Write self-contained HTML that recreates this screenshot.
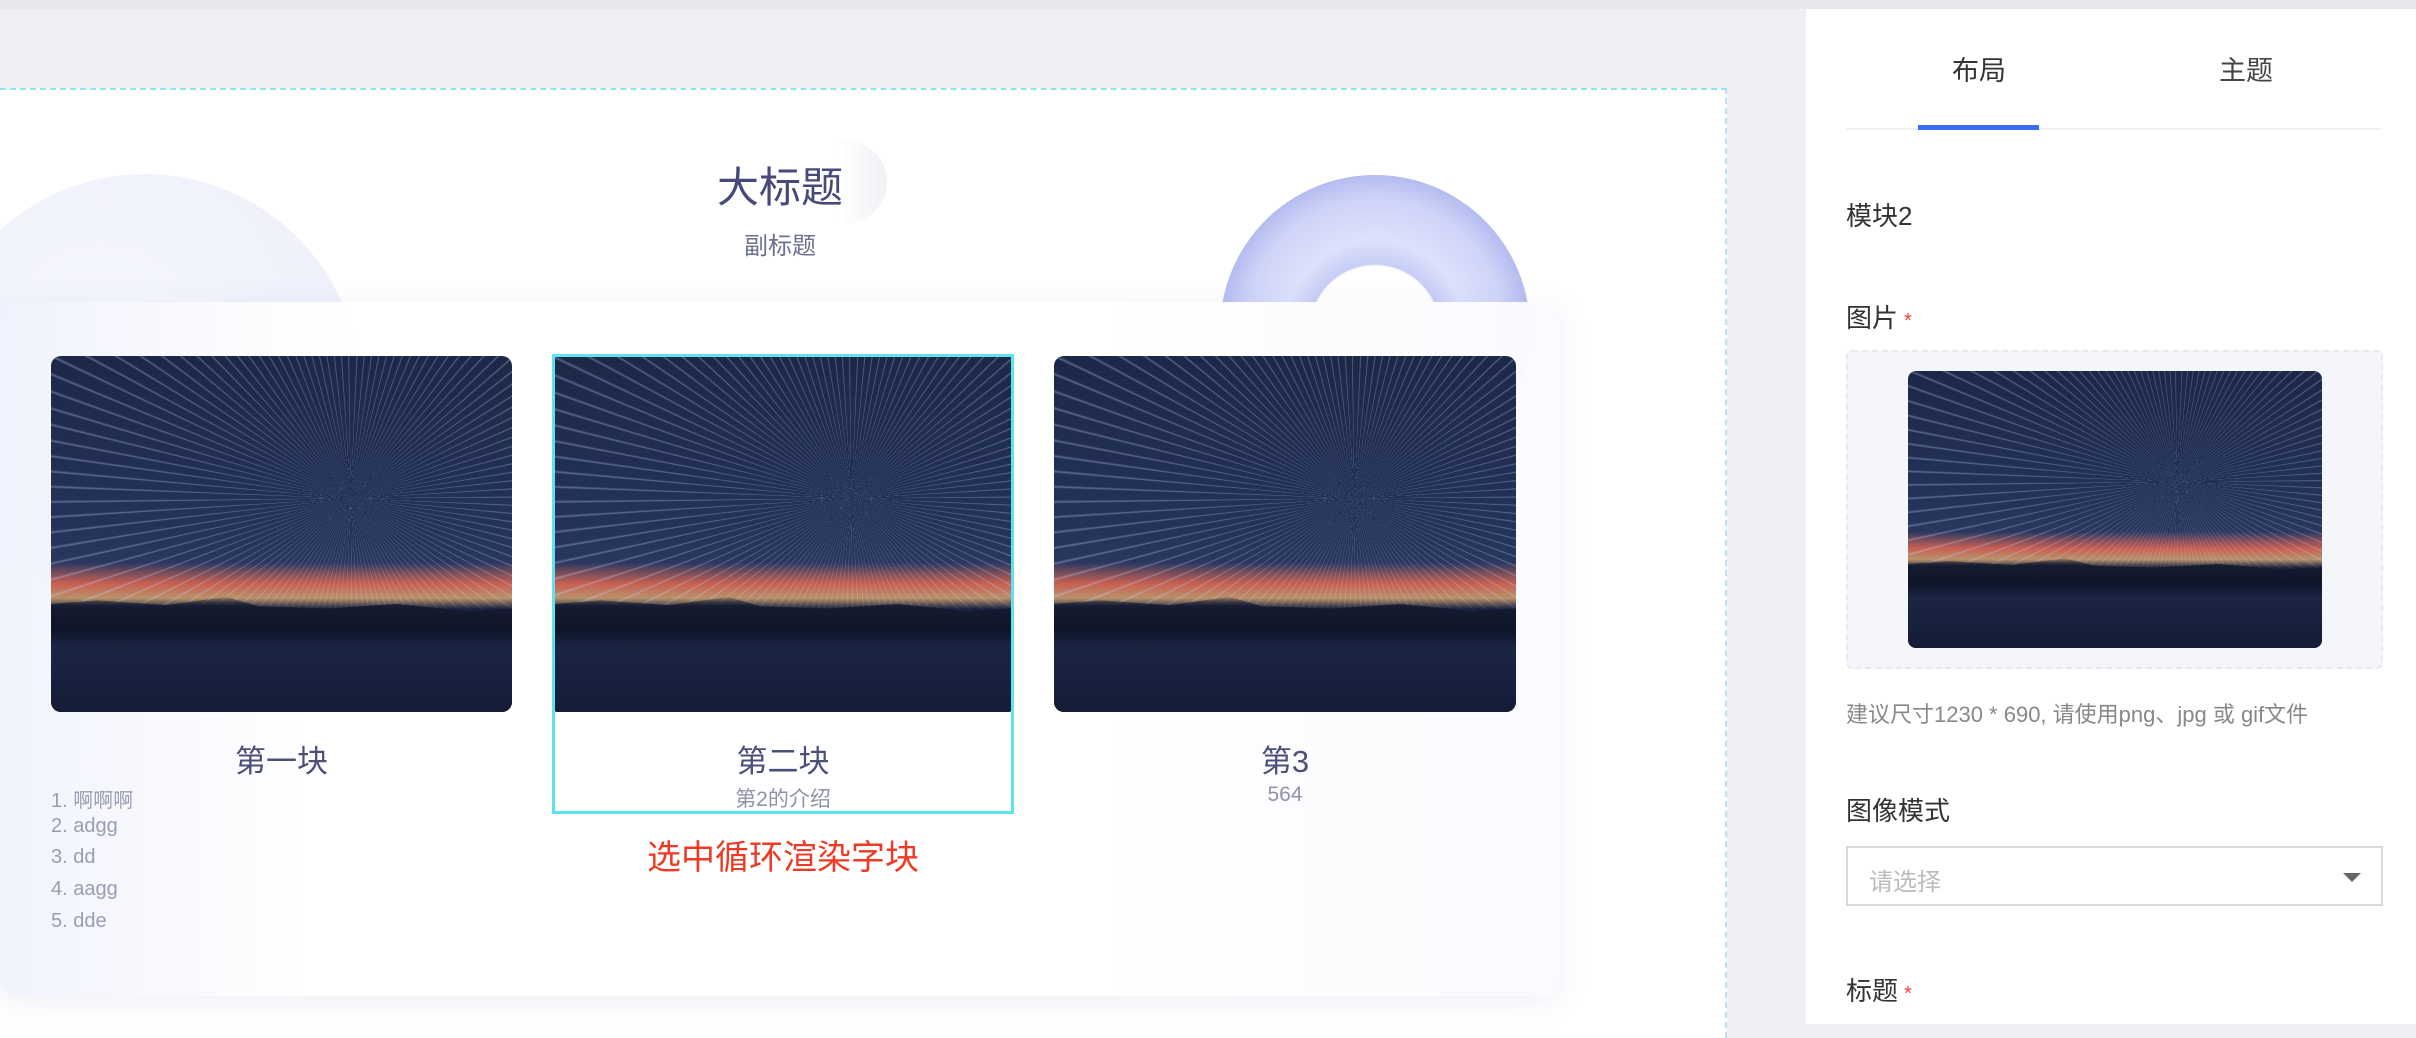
<!DOCTYPE html>
<html><head><meta charset="utf-8">
<style>
*{margin:0;padding:0;box-sizing:border-box}
body{width:2416px;height:1024px;overflow:hidden;background:#eeeff4;font-family:"Liberation Sans","Noto Sans CJK SC",sans-serif;position:relative}
.topbar{position:absolute;left:0;top:0;width:2416px;height:9px;background:#e6e7ec}
.canvas{position:absolute;left:0;top:88px;width:1727px;height:950px;background:#fff;border-top:2px dashed #8ee3ef;border-right:2px dashed #bde0f0;overflow:hidden}
.blob{position:absolute;left:-70px;top:84px;width:430px;height:430px;border-radius:50%;background:radial-gradient(circle at 40% 40%,#f6f7fd,#eef0fb 70%,#f8f9fe)}
.torus{position:absolute;left:1220px;top:85px;width:310px;height:310px;border-radius:50%;background:radial-gradient(circle at 50% 50%,transparent 64px,#c7cdf6 66px,#dde1fb 90px,#cfd4f8 130px,#b4bcf0 155px,transparent 156px)}
.ball{position:absolute;left:803px;top:50px;width:84px;height:84px;border-radius:50%;background:linear-gradient(90deg,#fff 40%,#f1f2f6)}
.title{position:absolute;left:0;width:1560px;text-align:center;top:64px;font-size:42px;color:#454a7a}
.sub{position:absolute;left:0;width:1560px;text-align:center;top:136px;font-size:24px;color:#6b7090}
.card{position:absolute;left:0;top:212px;width:1560px;height:694px;border-radius:18px;background:linear-gradient(90deg,rgba(240,242,253,.9),rgba(255,255,255,.97) 20%,#fff 70%,rgba(250,250,255,.97));box-shadow:0 6px 30px rgba(120,130,200,.12)}
.img{position:absolute;border-radius:10px;overflow:hidden;background:
linear-gradient(180deg,transparent 0%,transparent 58%,rgba(255,110,80,.75) 64%,rgba(250,190,120,.7) 68%,transparent 71%),
linear-gradient(180deg,#1d2848 0%,#24335a 50%,#2c3a62 62%,#1a2240 70%);}
.img::before{content:"";position:absolute;inset:0;background:repeating-conic-gradient(from 0deg at 65% 40%,rgba(255,255,255,.0) 0deg,rgba(255,255,255,.0) 2.2deg,rgba(200,215,255,.35) 2.5deg,rgba(255,255,255,0) 2.9deg);-webkit-mask:linear-gradient(180deg,#000 0,#000 68%,transparent 72%);mask:linear-gradient(180deg,#000 0,#000 68%,transparent 72%)}
.img::after{content:"";position:absolute;left:0;right:0;bottom:0;height:33%;background:linear-gradient(180deg,transparent 0,#151b30 10%,#0f1528 30%,#1b2544 45%,#141c36 100%);clip-path:polygon(0 8%,10% 5%,25% 9%,38% 2%,45% 10%,60% 12%,75% 8%,90% 14%,100% 12%,100% 100%,0 100%)}
.ct{position:absolute;text-align:center;font-size:31px;color:#4a5079;top:646px}
.cs{position:absolute;text-align:center;font-size:21px;color:#8e92aa;top:693px}
.li{position:absolute;left:51px;font-size:20px;color:#9a9db2}
.red{position:absolute;left:583px;width:400px;text-align:center;top:740px;font-size:34px;color:#ee3a24}
.panel{position:absolute;left:1806px;top:9px;width:610px;height:1015px;background:#fff}
.tab{position:absolute;top:40px;font-size:27px;color:#333}
.lbl{position:absolute;left:40px;font-size:26px;color:#333}
.star{color:#f04134;font-size:20px;margin-left:6px}
</style></head><body>
<div class="topbar"></div>
<div class="canvas">
  <div class="blob"></div>
  <div class="torus"></div>
  <div class="ball"></div>
  <div class="title">大标题</div>
  <div class="sub">副标题</div>
  <div class="card"></div>
  <div class="img" style="left:51px;top:266px;width:461px;height:356px"></div>
  <div class="img" style="left:555px;top:266px;width:456px;height:356px;border-radius:2px"></div>
  <div style="position:absolute;left:552px;top:264px;width:462px;height:460px;border:3px solid #5fe3f0"></div>
  <div class="img" style="left:1054px;top:266px;width:462px;height:356px"></div>
  <div class="ct" style="left:51px;width:461px">第一块</div>
  <div class="ct" style="left:555px;width:456px">第二块</div>
  <div class="cs" style="left:555px;width:456px">第2的介绍</div>
  <div class="ct" style="left:1054px;width:462px">第3</div>
  <div class="cs" style="left:1054px;width:462px">564</div>
  <div class="li" style="top:694px">1. 啊啊啊</div>
  <div class="li" style="top:725px">2. adgg</div>
  <div class="li" style="top:756px">3. dd</div>
  <div class="li" style="top:788px">4. aagg</div>
  <div class="li" style="top:820px">5. dde</div>
  <div class="red">选中循环渲染字块</div>
</div>
<div class="panel">
  <div class="tab" style="left:146px">布局</div>
  <div class="tab" style="left:413px;color:#444">主题</div>
  <div style="position:absolute;left:40px;top:119px;width:535px;height:2px;background:#eef0f3"></div>
  <div style="position:absolute;left:112px;top:116px;width:121px;height:5px;background:#3c6cf0"></div>
  <div class="lbl" style="top:187px">模块2</div>
  <div class="lbl" style="top:289px">图片<span class="star">*</span></div>
  <div style="position:absolute;left:40px;top:341px;width:537px;height:319px;background:#f5f6fa;border:2px dashed #e8e9ee;border-radius:6px"></div>
  <div class="img" style="left:102px;top:362px;width:414px;height:277px;border-radius:8px"></div>
  <div style="position:absolute;left:40px;top:688px;font-size:22px;color:#888">建议尺寸1230 * 690, 请使用png、jpg 或 gif文件</div>
  <div class="lbl" style="top:782px">图像模式</div>
  <div style="position:absolute;left:40px;top:837px;width:537px;height:60px;border:2px solid #d9dae0"></div>
  <div style="position:absolute;left:63px;top:853px;font-size:24px;color:#bbb">请选择</div>
  <div style="position:absolute;left:537px;top:864px;width:0;height:0;border-left:9px solid transparent;border-right:9px solid transparent;border-top:9px solid #666"></div>
  <div class="lbl" style="top:962px">标题<span class="star">*</span></div>
</div>
</body></html>
